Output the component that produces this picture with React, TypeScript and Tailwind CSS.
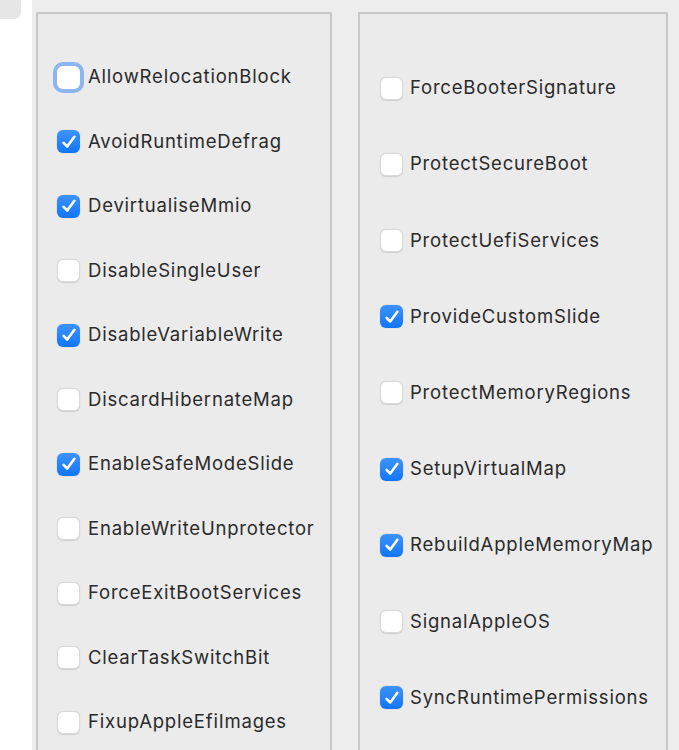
const left: [string, boolean][] = [
  ['AllowRelocationBlock', false],
  ['AvoidRuntimeDefrag', true],
  ['DevirtualiseMmio', true],
  ['DisableSingleUser', false],
  ['DisableVariableWrite', true],
  ['DiscardHibernateMap', false],
  ['EnableSafeModeSlide', true],
  ['EnableWriteUnprotector', false],
  ['ForceExitBootServices', false],
  ['ClearTaskSwitchBit', false],
  ['FixupAppleEfiImages', false],
];

const right: [string, boolean][] = [
  ['ForceBooterSignature', false],
  ['ProtectSecureBoot', false],
  ['ProtectUefiServices', false],
  ['ProvideCustomSlide', true],
  ['ProtectMemoryRegions', false],
  ['SetupVirtualMap', true],
  ['RebuildAppleMemoryMap', true],
  ['SignalAppleOS', false],
  ['SyncRuntimePermissions', true],
];

const Box = ({ checked, focused }: { checked: boolean; focused?: boolean }) => {
  if (checked) {
    return (
      <span className="flex h-[23px] w-[23px] shrink-0 items-center justify-center rounded-[6px] bg-gradient-to-b from-[#3b93fd] to-[#0f75f5] shadow-[0_0_1px_rgba(0,0,0,0.3)]">
        <svg width="18" height="18" viewBox="0 0 16 16" fill="none">
          <path d="M3.2 8.8 L6.4 12 L12.8 3.4" stroke="white" strokeWidth="2.3" strokeLinecap="round" strokeLinejoin="round" />
        </svg>
      </span>
    );
  }
  return (
    <span
      className={
        focused
          ? 'h-[23px] w-[23px] shrink-0 rounded-[6px] bg-white ring-4 ring-[#8db6f0]'
          : 'h-[23px] w-[23px] shrink-0 rounded-[6px] border border-[#d9d9d9] bg-white shadow-[0_0.5px_1px_rgba(0,0,0,0.12)]'
      }
    />
  );
};

const Row = ({ label, checked, focused, tall }: { label: string; checked: boolean; focused?: boolean; tall?: boolean }) => (
  <div className={tall ? 'flex h-[76.2px] items-center gap-[7px]' : 'flex h-[64.5px] items-center gap-[8px]'}>
    <Box checked={checked} focused={focused} />
    <span className="text-[18.5px] tracking-[0.8px] text-[#2a2a2a]">{label}</span>
  </div>
);

export default function App() {
  return (
    <div className="flex h-[750px] w-[679px] overflow-hidden bg-white font-['Inter',sans-serif]">
      <div className="w-[32px] shrink-0">
        <div className="h-[19px] w-[21px] rounded-br-[7px] bg-[#e6e6e6]" />
      </div>
      <div className="flex flex-1 gap-[26px] bg-[#eeeeee] pl-[4px] pt-[12px]">
        <div className="h-[800px] w-[296px] shrink-0 border-2 border-[#c8c8c8] bg-[#ebebeb] pl-[19px] pt-[31px]">
          {left.map(([l, c], i) => (
            <Row key={l} label={l} checked={c} focused={i === 0} />
          ))}
        </div>
        <div className="h-[800px] w-[310px] shrink-0 border-2 border-[#c8c8c8] bg-[#ebebeb] pl-[20px] pt-[36px]">
          {right.map(([l, c]) => (
            <Row key={l} label={l} checked={c} tall />
          ))}
        </div>
      </div>
    </div>
  );
}
